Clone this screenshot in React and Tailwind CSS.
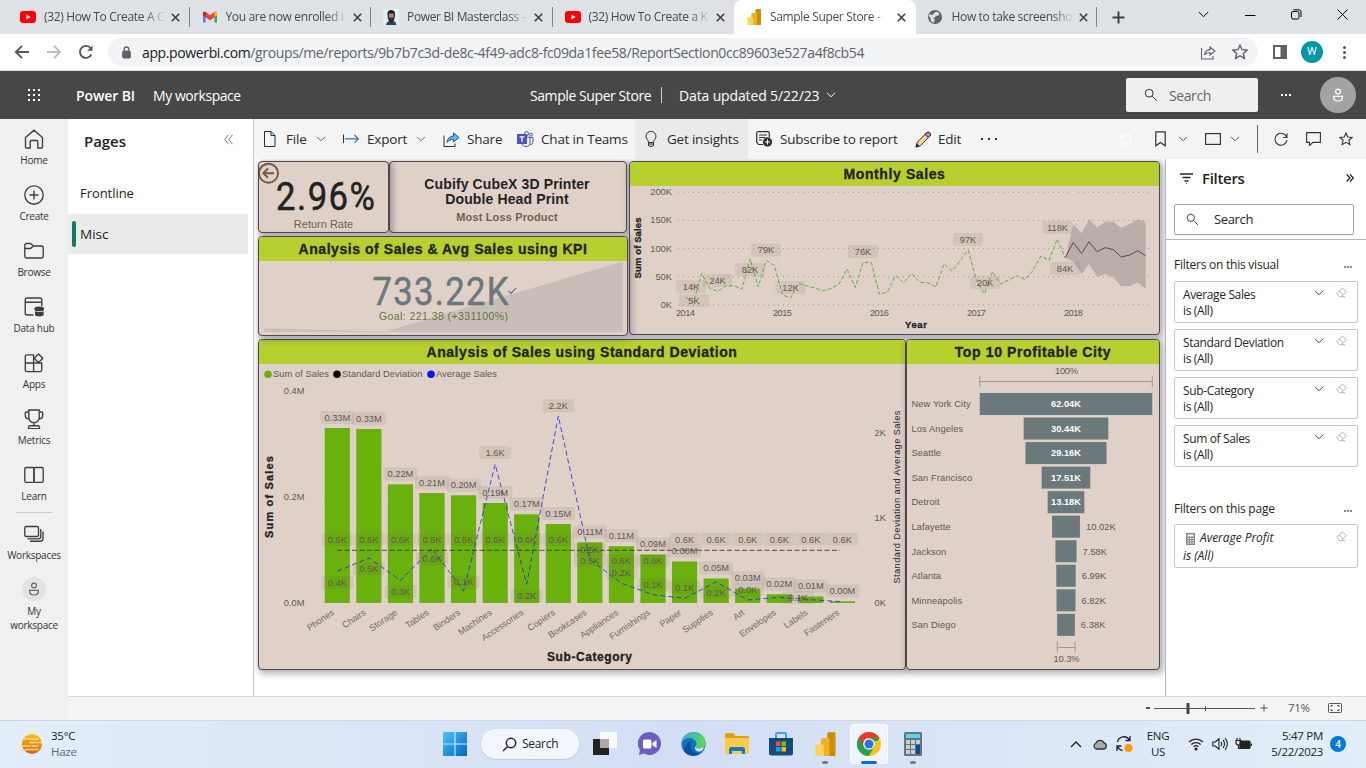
import React from "react";

/* ---------- shared glyphs ---------- */
const Svg = ({ w = 16, h, box, className = "", children, sw = 1, stroke = "currentColor" }) => (
  <svg width={w} height={h || w} viewBox={box || `0 0 ${w} ${h || w}`} fill="none" stroke={stroke} strokeWidth={sw} className={"shrink-0 " + className}>
    {children}
  </svg>
);
const Chevron = ({ className = "text-[#555]" }) => (
  <Svg w={10} h={6} className={className}><path d="M1 .8l4 4 4-4" /></Svg>
);
const Magnifier = ({ className = "text-[#333]", w = 14 }) => (
  <Svg w={w} box="0 0 14 14" className={className}><circle cx="5.2" cy="5.2" r="3.9" /><path d="M8.2 8.2l4.6 4.6" /></Svg>
);
const Person = ({ w = 14, className }) => (
  <Svg w={w} box="0 0 14 14" sw={1.2} className={className}><circle cx="7" cy="3.6" r="2.4" /><path d="M2.600 8.400h8.800v.9c0 2.400-2 3.700-4.400 3.700s-4.400-1.300-4.400-3.700z" /></Svg>
);
const Star = ({ w = 14, className }) => (
  <Svg w={w} box="0 0 14 14" sw={1.1} className={className}><path d="M7 1l1.800 4 4.400.4-3.300 2.900 1 4.300L7 10.300 3.100 12.600l1-4.300L.8 5.400 5.200 5z" /></Svg>
);

/* ---------- browser ---------- */
const YouTube = () => (
  <svg width="16" height="12" viewBox="0 0 16 12"><rect width="16" height="12" rx="3" fill="#f00" /><path d="M6.400 3.500v5L10.600 6z" fill="#fff" /></svg>
);
const Gmail = () => (
  <svg width="16" height="12" viewBox="0 0 16 12"><path d="M1 3v8.600h2.600V5z" fill="#4285f4" /><path d="M15 3v8.600h-2.600V5z" fill="#34a853" /><path d="M1 2.500C1 .8 2.800.3 3.800 1.100L8 4.300l4.200-3.200c1-.8 2.800-.3 2.800 1.400v1.700l-7 5.200-7-5.200z" fill="#ea4335" /><path d="M1 4.200V2.500C1 1.600 1.700.8 2.500.8l1.100.3V6z" fill="#c5221f" /><path d="M15 4.200V2.500c0-.9-.7-1.700-1.500-1.700l-1.100.3V6z" fill="#fbbc04" /></svg>
);
const Portrait = () => (
  <svg width="16" height="16" viewBox="0 0 16 16"><rect width="16" height="16" fill="#e3f0f8" /><path d="M3 16c.5-3 2.500-4.500 5.500-4.500s4.500 1.500 5 4.500z" fill="#24456b" /><path d="M4.500 5c0-3 1.500-4 3.700-4s3.800 1 3.800 4c0 5-1.500 8-3.800 8S4.500 10 4.500 5z" fill="#1c1c22" /><path d="M5.800 4.500h4.900v3.500c0 1.500-1 2.500-2.400 2.500S5.800 9.500 5.800 8z" fill="#b5846a" /><path d="M6.300 8.500h4v1.500h-4z" fill="#3a2a26" /></svg>
);
const PbiLogo = ({ w = 16, h = 16 }) => (
  <svg width={w} height={h} viewBox="0 0 16 16"><path d="M9.500 1c0-.5.4-.9.9-.9h3.700c.5 0 .9.400.9.900V15c0 .5-.4 1-.9 1H9.500z" fill="#cf8a06" /><path d="M5.300 5c0-.5.400-.9.900-.9h3.900c.5 0 .9.400.9.900v11H5.300z" fill="#ecb022" /><path d="M1.500 9.200c0-.5.4-.9.9-.9h3.900c.5 0 .9.400.9.900V16H2.400c-.5 0-.9-.4-.9-.9z" fill="#fad45c" /></svg>
);
const Globe = () => (
  <svg width="14" height="14" viewBox="0 0 14 14"><circle cx="7" cy="7" r="7" fill="#5f6368" /><path d="M7 2.200l2.500-.5 2 2-1.500 2H7.500v1.500L5 8l2 1.500L5.500 13 3 11 2.500 8 .8 6 2 3.500l2 2z" fill="#dee1e6" /></svg>
);
const TABS = [
  { icon: YouTube, title: "(32) How To Create A C" },
  { icon: Gmail, title: "You are now enrolled i" },
  { icon: Portrait, title: "Power BI Masterclass -" },
  { icon: YouTube, title: "(32) How To Create a K" },
  { icon: PbiLogo, title: "Sample Super Store -", active: true },
  { icon: Globe, title: "How to take screensho" },
];
const Tab = ({ icon: Icon, title, active, divider }) => (
  <div className={"relative flex h-[34px] w-[181.5px] items-center pl-3 " + (active ? "rounded-t-lg bg-white" : "")}>
    <div className="flex w-6 items-center"><Icon /></div>
    <div className="w-[125px] whitespace-nowrap text-[12px] tracking-[-0.34px] text-[#45494e] [mask-image:linear-gradient(to_right,#000_80%,transparent_98%)]">{title}</div>
    <Svg w={9} sw={1.600} className="ml-[2px] text-[#3c4043]"><path d="M.8.8l7.400 7.400M8.200.8L.8 8.200" /></Svg>
    {divider && <div className="absolute right-0 top-[7px] h-5 w-px bg-[#808387]" />}
  </div>
);
const Browser = () => (
  <>
    <div className="flex h-[34px] bg-[#dee1e6] pl-2">
      {TABS.map((t, i) => <Tab key={i} {...t} divider={i !== 3 && i !== 4} />)}
      <div className="flex flex-1 items-center">
        <Svg w={13} sw={2} className="ml-[15px] text-[#3c4043]"><path d="M6.500.5v12M.5 6.500h12" /></Svg>
        <div className="ml-auto mb-[6px] flex items-center pr-[18px] text-black">
          <Svg w={11} h={7} className="mr-[36px]"><path d="M.8 1l4.700 4.700L10.200 1" /></Svg>
          <Svg w={11} h={11} className="mr-[35px]"><path d="M0 6.500h10.500" /></Svg>
          <Svg w={11} h={11} className="mr-[35px]"><rect x=".5" y="2.500" width="7.500" height="7.500" rx="1.500" /><path d="M2.500.8H8A2 2 0 0 1 10 2.800V8" /></Svg>
          <Svg w={11} h={11}><path d="M.5.5l10 10M10.500.5l-10 10" /></Svg>
        </div>
      </div>
    </div>
    <div className="flex h-[37px] items-center border-b border-[#dadfdf] bg-white pl-[14px] pr-[20px]">
      <Svg w={16} sw={1.900} className="text-[#54585d]"><path d="M15 8H2M8 1.800L1.800 8 8 14.200" /></Svg>
      <Svg w={16} sw={1.900} className="ml-4 text-[#babcbe]"><path d="M1 8h13M8 1.800L14.200 8 8 14.200" /></Svg>
      <Svg w={16} sw={1.900} className="ml-4 text-[#54585d]"><path d="M13.400 10.500A6 6 0 1 1 12.600 4" /><path d="M14.500 1.500v5.300H9.200z" fill="currentColor" stroke="none" /></Svg>
      <div className="ml-[14px] flex h-7 w-[1150px] items-center rounded-full bg-[#f1f3f4] pl-[14px]">
        <Svg w={9} h={13}><rect x=".7" y="5" width="7.600" height="7" rx="1" fill="#5f6368" stroke="#5f6368" /><path d="M2.200 5V3.300a2.300 2.300 0 0 1 4.600 0V5" stroke="#5f6368" strokeWidth="1.300" /></Svg>
        <div className="ml-[11px] w-[1060px] whitespace-nowrap text-[14px] tracking-[-0.37px] text-[#5f6368]"><span className="text-[#202124]">app.powerbi.com</span>/groups/me/reports/9b7b7c3d-de8c-4f49-adc8-fc09da1fee58/ReportSection0cc89603e527a4f8cb54</div>
      </div>
      <div className="-ml-[58px] flex items-center">
        <Svg w={16} className="text-[#5f6368]" sw={1.100}><path d="M1.500 4v11h11.500v-3" /><path d="M4.500 11C5 7.500 7 5.800 10 5.600V3l5 4-5 4V8.500C7.500 8.500 6 9 4.500 11z" /></Svg>
        <Star w={16} className="ml-[16px] text-[#54585d]" />
      </div>
      <Svg w={14} className="ml-[25px] text-[#5f6368]"><rect x="1" y="1" width="12" height="12" strokeWidth="2" /><path d="M8 1h5v12H8z" fill="currentColor" /></Svg>
      <div className="ml-[14px] flex h-[22px] w-[22px] items-center justify-center rounded-full bg-[#0097a7] font-['Roboto'] text-[11px] text-white">W</div>
      <div className="ml-auto flex flex-col gap-[2px]"><i className="h-[3px] w-[3px] rounded-full bg-[#54585d]" /><i className="h-[3px] w-[3px] rounded-full bg-[#54585d]" /><i className="h-[3px] w-[3px] rounded-full bg-[#54585d]" /></div>
    </div>
  </>
);

/* ---------- Power BI header ---------- */
const Header = () => (
  <div className="flex h-12 items-center bg-[#474747] text-[14px] text-white">
    <svg width="12" height="12" viewBox="0 0 12 12" className="ml-7 shrink-0">
      {[0, 5, 10].map((y) => [0, 5, 10].map((x) => <rect key={x + "-" + y} x={x} y={y} width="2" height="2" fill="#fff" />))}
    </svg>
    <div className="ml-[36px] w-[77px] whitespace-nowrap text-[14px] font-semibold tracking-[-0.1px]">Power BI</div>
    <div className="w-[377px] whitespace-nowrap tracking-[-0.45px]">My workspace</div>
    <div className="w-[131px] whitespace-nowrap tracking-[-0.42px]">Sample Super Store</div>
    <div className="h-4 w-[18px]"><div className="h-4 w-px bg-[#d0d0d0]" /></div>
    <div className="w-[147px] whitespace-nowrap tracking-[-0.14px]">Data updated 5/22/23</div>
    <Chevron className="text-white" />
    <div className="ml-[290px] flex h-[34px] w-[132px] items-center rounded-[2px] bg-[#eee] pl-[18px]">
      <Magnifier />
      <span className="ml-[11px] text-[14px] tracking-[-0.4px] text-[#666]">Search</span>
    </div>
    <div className="ml-[23px] flex gap-[2px]"><i className="h-[2px] w-[2px] bg-white" /><i className="h-[2px] w-[2px] bg-white" /><i className="h-[2px] w-[2px] bg-white" /></div>
    <div className="ml-[29px] flex h-9 w-9 items-center justify-center rounded-full bg-[#a3a3a3]"><Person className="text-white" /></div>
  </div>
);

/* ---------- left navigation ---------- */
const NAV = [
  ["Home", <><path d="M1.500 8.500L10 1.200l8.500 7.300V18a1 1 0 0 1-1 1h-3.700v-6.500a1 1 0 0 0-1-1H7.200a1 1 0 0 0-1 1V19H2.500a1 1 0 0 1-1-1z" /></>],
  ["Create", <><circle cx="10" cy="10" r="9.200" /><path d="M10 5.500v9M5.500 10h9" /></>],
  ["Browse", <><path d="M.8 7.500V4.200C.8 3.200 1.500 2.500 2.500 2.500h4L9.500 5h7.800c1 0 1.900.8 1.900 1.800v8.400c0 1-.8 1.800-1.800 1.800H2.600c-1 0-1.800-.8-1.800-1.800zM.8 7.500h5.700L9.500 5" /></>],
  ["Data hub", <><path d="M9.500 18H3.200A2 2 0 0 1 1.200 16V3A2 2 0 0 1 3.200 1h12.600a2 2 0 0 1 2 2v6M1.200 5.200h16.600" /><ellipse cx="15.300" cy="11.900" rx="4.300" ry="1.700" fill="currentColor" /><path d="M11 14v3.800c0 1 2 1.700 4.300 1.700s4.300-.7 4.300-1.700V14c-2 1.300-6.600 1.300-8.600 0z" fill="currentColor" stroke="none" /></>],
  ["Apps", <><path d="M9.600 18.600H3a1.700 1.700 0 0 1-1.700-1.700V3.500a1.700 1.700 0 0 1 1.700-1.700h6.600zM1.300 10h16.400v6.900a1.700 1.700 0 0 1-1.700 1.700H9.600" /><path d="M14.500.900l4.300 4.300-4.300 4.300-4.300-4.300z" fill="#f0f0f0" strokeLinejoin="round" /></>],
  ["Metrics", <><path d="M4.800 1h10.400v7.500a5.200 5.200 0 0 1-10.400 0zM4.800 3H2.300c-.6 0-1 .4-1 1v2.500c0 1.800 1.500 3.300 3.500 3.300M15.200 3h2.500c.6 0 1 .4 1 1v2.500c0 1.800-1.500 3.300-3.500 3.300M10 13.700v3M4.500 19.600v-1.200c0-1 .7-1.700 1.700-1.700h7.600c1 0 1.700.7 1.700 1.700v1.200z" /></>],
  ["Learn", <><rect x=".8" y="2.500" width="9.200" height="14.800" rx="1.300" /><rect x="10" y="2.500" width="9.200" height="14.800" rx="1.300" /></>],
];
const NavItem = ({ label, children }) => (
  <div className="flex h-14 flex-col items-center pt-[10px]">
    <Svg w={20} sw={1.350} className="text-[#3d3d3d]">{children}</Svg>
    <div className="mt-[3px] whitespace-nowrap text-[10px] leading-4 tracking-[-0.25px] text-[#333]">{label}</div>
  </div>
);
const LeftNav = () => (
  <div className="w-[68px] shrink-0 bg-[#f0f0f0]">
    {NAV.map(([l, p]) => <NavItem key={l} label={l}>{p}</NavItem>)}
    <div className="mx-auto mt-px h-px w-9 bg-[#c8c8c8]" />
    <div className="pt-px">
      <NavItem label="Workspaces"><rect x=".8" y="2.500" width="13.700" height="10" rx="1.500" /><path d="M16.800 5v7.500c0 1.500-1 2.300-2.300 2.300H3.500M19 7.500v7c0 1.700-1.300 2.700-2.800 2.700H6" /></NavItem>
    </div>
    <div className="flex flex-col items-center pt-[7px]">
      <div className="flex h-6 w-6 items-center justify-center rounded-full bg-[#e3e3e3]"><Person w={14} className="text-[#666]" /></div>
      <div className="mt-[3px] text-center text-[10px] leading-[14px] tracking-[-0.25px] text-[#333]">My<br />workspace</div>
    </div>
  </div>
);
const PagesPane = () => (
  <div className="flex w-[186px] shrink-0 flex-col border-r border-[#c4c4c4] bg-white text-[#222]">
    <div className="flex h-[55px] items-center justify-between pl-4 pr-[20px] pb-[11px]">
      <span className="text-[15px] font-semibold tracking-[-0.05px]">Pages</span>
      <Svg w={9} h={11} className="-mt-1 text-[#777]"><path d="M4.500.8L.8 5.500l3.700 4.700M8.500.8L4.800 5.500l3.700 4.700" /></Svg>
    </div>
    <div className="flex h-10 items-center pl-3 text-[13px] tracking-[-0.05px]">Frontline</div>
    <div className="flex h-10 w-[180px] items-center bg-[#eaeaea] pl-1">
      <div className="h-[26px] w-1 rounded-full bg-[#117865]" />
      <span className="ml-1 text-[13.500px] font-medium">Misc</span>
    </div>
  </div>
);

/* ---------- toolbar ---------- */
const Tool = ({ icon, label, w, gap = "w-6", chev, className = "" }) => (
  <div className={"flex h-10 shrink-0 items-center whitespace-nowrap " + w + " " + className}>
    <div className={"flex shrink-0 items-center " + gap}>{icon}</div>
    <span>{label}</span>
    {chev && <Chevron className={"ml-[9px] text-[#666]"} />}
  </div>
);
const Toolbar = () => (
  <div className="flex h-10 items-center bg-[#f4f4f4] pl-[9px] text-[13.500px] tracking-[-0.2px] text-[#2b2b2b]">
    <Tool w="w-[80px]" gap="w-[23px]" label="File" chev icon={<Svg w={13} h={16}><path d="M1.500.5h6.500l4 4v11H1.500zM8 .5v4h4" /></Svg>} />
    <Tool w="w-[100px]" label="Export" chev icon={<Svg w={16} h={12}><path d="M.5 1.500v8.500" /><path d="M2 5.800h13M11.500 2l3.800 3.800L11.500 9.600" stroke="#2a7ab8" strokeWidth="1.200" /></Svg>} />
    <Tool w="w-[74px]" label="Share" icon={<Svg w={17} h={15}><path d="M1 3.500v11h11v-3" /><path d="M4 10.500C4.500 6.500 6.500 4.300 10.500 4V1l5.500 4.500-5.500 4.500V7.500C7.500 7.500 5.500 8.500 4 10.500z" fill="#6cb2ec" stroke="#0f5a9c" /></Svg>} />
    <Tool w="w-[118px]" label="Chat in Teams" icon={<Svg w={17} h={16}><circle cx="9.500" cy="2.600" r="2" stroke="#4b53bc" /><circle cx="14" cy="3.600" r="1.500" stroke="#4b53bc" /><path d="M10 6.200h3V12c0 2-1.500 3.500-4 3.500s-3.500-1-4-2.500M13 6.500h3V11c0 1.500-1 2.500-3 2.500" stroke="#4b53bc" /><rect x="0" y="3" width="10" height="10" fill="#4b53bc" stroke="none" /><path d="M2.500 5.800h5M5 5.800v5" stroke="#fff" strokeWidth="1.300" /></Svg>} />
    <Tool w="w-[113px]" className="bg-[#eaeaea] pl-[10px]" gap="w-[22px]" label="Get insights" icon={<Svg w={12} h={16}><path d="M3.500 11.500C3.500 9 1 8 1 5.300a5 5 0 0 1 10 0c0 2.700-2.500 3.700-2.500 6.200zM3.500 11.500v2.500c0 .8.5 1.300 1.300 1.300h2.400c.8 0 1.300-.5 1.300-1.300v-2.500M3.500 13h5" /></Svg>} />
    <Tool w="w-[168px]" className="pl-2" label="Subscribe to report" icon={<Svg w={17} h={16}><path d="M7 13.500H2.500L.7 11V2.200C.7 1.300 1.300.700 2.200.700h9.600c.9 0 1.500.600 1.500 1.500V6M3 4h8M3 6.500h6M3 9h3" strokeWidth="1.200" /><circle cx="11.500" cy="11" r="4.700" fill="#333" stroke="none" /><path d="M11.500 8.500v5M9 11h5" stroke="#fff" /></Svg>} />
    <Tool w="w-[64px]" gap="w-[23px]" label="Edit" className="-ml-px" icon={<Svg w={17} h={17}><path d="M1 16l1.300-4.700L11.300 2c1.100-1.100 2.400-1.100 3.400-.1s1 2.300-.1 3.400L5.500 14.700z" fill="#f6d78b" strokeLinejoin="round" /><path d="M10 3.300l3.300 3.300 1.700-1.700c.9-1 .8-2.200 0-3s-2.200-.9-3.200.1z" fill="#c77fd0" /><path d="M1 16l.9-3L4 15.100z" fill="#2b2b2b" /></Svg>} />
    <div className="ml-[2px] flex gap-[5px]"><i className="h-[2px] w-[2px] bg-[#333]" /><i className="h-[2px] w-[2px] bg-[#333]" /><i className="h-[2px] w-[2px] bg-[#333]" /></div>
    <div className="ml-auto flex items-center pr-[13px] text-[#333]">
      <Svg w={13} h={13} className="mr-[22px] text-white" sw={1.200}><path d="M1 1v4h4M1.500 4.800A5 5 0 1 1 2 9" /></Svg>
      <Svg w={11} h={16} sw={1.200} className="mr-[12px]"><path d="M.8.8h9.400v14L5.500 11.500.8 14.800z" /></Svg>
      <Chevron />
      <Svg w={16} h={12} sw={1.200} className="ml-[17px] mr-[9px]"><rect x=".6" y=".6" width="14.800" height="10.800" /></Svg>
      <Chevron />
      <div className="ml-[17px] h-7 w-px bg-[#666]" />
      <Svg w={14} className="ml-[16px]" sw={1.100}><path d="M12.800 5.500A6 6 0 1 0 13 8M13 1.500V5.500H9" /></Svg>
      <Svg w={15} h={14} className="ml-[18px]" sw={1.100}><path d="M.6.6h13.800v9.800H7L3.500 13.500v-3.100H.6z" /></Svg>
      <Star className="ml-[18px]" />
    </div>
  </div>
);

/* ---------- report tiles ---------- */
const TILE = "overflow-hidden rounded-[4px] border border-[#4e4848] bg-[#dfd1c7] shadow-[2px_2px_6px_2px_rgba(60,55,85,0.38)]";
const TileTitle = ({ children, className = "" }) => (
  <div className={"flex shrink-0 items-center justify-center whitespace-nowrap bg-[#b7cf2f] font-['Liberation_Sans'] text-[14px] font-bold text-[#222] [-webkit-text-stroke:0.3px_#222] " + className}>{children}</div>
);
const Label = ({ x, y, w = 30, children, box = true }) => (
  <g>
    {box && <rect x={x - w / 2} y={y - 6.500} width={w} height="13" rx="2" fill="#6b5b50" fillOpacity=".1" />}
    <text x={x} y={y + 3.300} textAnchor="middle" fontSize="9.300" fill="#605850">{children}</text>
  </g>
);

const KpiTile = () => (
  <div className={"relative flex h-[100px] flex-col " + TILE}>
    <TileTitle className="h-6 tracking-[0.55px]">Analysis of Sales &amp; Avg Sales using KPI</TileTitle>
    <svg width="368" height="74" viewBox="259 261 368 74" className="block">
      <path d="M264 328.300L385 331.500 623 261.500V331.800H264z" fill="#c8beb7" />
      <text transform="translate(372.500 304.500) scale(.9 1)" fontFamily="Roboto" fontSize="38.500" fill="#6b787b" stroke="#6b787b" strokeWidth=".5" textLength="151" lengthAdjust="spacing">733.22K</text>
      <path d="M508.500 291l2.500 2.500 5-5.500" fill="none" stroke="#6b787b" strokeWidth="1.200" />
      <text x="443.500" y="319.500" textAnchor="middle" fontFamily="Liberation Sans" fontSize="10.500" fill="#5f7445" textLength="129">Goal: 221.38 (+331100%)</text>
    </svg>
  </div>
);

const MONTHLY = [14, 5, 56, 29, 24, 34, 34, 28, 82, 32, 79, 70, 18, 12, 38, 34, 30, 25, 29, 37, 64, 31, 76, 75, 19, 23, 52, 39, 56, 40, 39, 32, 73, 60, 79, 97, 44, 20, 59, 37, 44, 52, 45, 61, 87, 79, 117, 83.500];
const MONTH_LABELS = [["14K", 691, 286.500], ["5K", 694, 300.500], ["24K", 717.500, 280.500], ["82K", 750, 269.500], ["79K", 766, 250], ["12K", 790.500, 287.500], ["76K", 863, 251.500], ["97K", 968, 239.500], ["20K", 985, 282.500], ["118K", 1057.500, 227.500], ["84K", 1065, 268.500]];
const MonthlyTile = () => (
  <div className={"flex h-[174px] w-[531px] flex-col " + TILE}>
    <TileTitle className="h-6 tracking-[0.6px]">Monthly Sales</TileTitle>
    <svg width="529" height="148" viewBox="630 186 529 148" className="block font-['Liberation_Sans']">
      {["200K", "150K", "100K", "50K", "0K"].map((t, i) => (
        <g key={t}>
          <path d={`M678 ${192.300 + i * 28.150}H1153`} stroke="#a3988f" strokeDasharray="1 4" />
          <text x="672" y={195.300 + i * 28.150} textAnchor="end" fontSize="9.300" fill="#605850">{t}</text>
        </g>
      ))}
      {[2014, 2015, 2016, 2017, 2018].map((t, i) => (
        <g key={t}>
          <path d={`M${685.500 + i * 97} 192V304`} stroke="#e8ddd5" strokeDasharray="1 4" />
          <text x={685.500 + i * 97} y="316" textAnchor="middle" fontSize="9.300" fill="#605850" textLength="19">{t}</text>
        </g>
      ))}
      <g transform="translate(990 115) scale(.3333)">
        <path d="M226 428L250 328 275 355 297 313 321 337 346 320 370 321 394 338 419 328 443 312 467 321V521L443 503 419 513 394 514 370 487 346 477 321 485 297 447 275 478 250 440z" fill="#bbada7" />
        <path d="M226 428L250 382 275 416 297 380 321 410 346 398 370 404 394 426 419 420 443 407 467 422" fill="none" stroke="#554c54" strokeWidth="3" />
      </g>
      <polyline points={MONTHLY.map((v, i) => `${685.500 + i * 8.080},${304.900 - v * 0.563}`).join(" ")} fill="none" stroke="#5fae4a" strokeWidth="1" strokeDasharray="4 2" />
      {MONTH_LABELS.map(([t, x, y]) => <Label key={t} x={x} y={y}>{t}</Label>)}
      <text transform="translate(641 248) rotate(-90)" textAnchor="middle" fontSize="9.500" fontWeight="bold" fill="#222" stroke="#222" strokeWidth=".3" textLength="61">Sum of Sales</text>
      <text x="916" y="328" textAnchor="middle" fontSize="9.500" fontWeight="bold" fill="#222" stroke="#222" strokeWidth=".3" textLength="22">Year</text>
    </svg>
  </div>
);

const CATS = [
  ["Phones", 428, "0.33M", 571.300], ["Chairs", 429, "0.33M", 558], ["Storage", 484.300, "0.22M", 580.300], ["Tables", 493, "0.21M", 548.500], ["Binders", 495.300, "0.20M", 591],
  ["Machines", 503, "0.19M", 464.300], ["Accessories", 514.300, "0.17M", 584.300], ["Copiers", 524, "0.15M", 416], ["Bookcases", 542.300, "0.11M", 559.500], ["Appliances", 546.200, "0.11M", 583.300],
  ["Furnishings", 554.500, "0.09M", 594.700], ["Paper", 561.500, "0.08M", 598.300], ["Supplies", 578.500, "0.05M", 582], ["Art", 588.500, "0.03M", 600], ["Envelopes", 594.300, "0.02M", 597.300], ["Labels", 596.500, "0.01M", 599.700], ["Fasteners", 601.300, "0.00M", 601.700],
];
const AVG_LABELS = [[0, "0.4K", 582.500], [1, "0.5K", 568.500], [2, "0.3K", 591.500], [3, "0.6K", 558.700], [4, "0.1K", 582], [5, "1.6K", 452.500], [6, "0.2K", 595.500], [7, "2.2K", 405.800], [8, "0.5K", 549.300], [8, "0.6K", 560.500], [9, "0.6K", 560.500], [9, "0.2K", 572.700], [10, "0.6K", 560.500], [10, "0.1K", 584.500], [11, "0.1K", 587.300], [12, "0.2K", 592.500], [13, "0.0K", 589.700], [14.600, "0.1K", 597.500]];
const cx = (i) => 337.300 + i * 31.570;
const DeviationTile = () => (
  <div className={"flex h-[331px] w-[648px] flex-col " + TILE}>
    <TileTitle className="h-6 tracking-[0.55px]">Analysis of Sales using Standard Deviation</TileTitle>
    <svg width="646" height="305" viewBox="259 364 646 305" className="block font-['Liberation_Sans']">
      {[["#6ab10d", 268, "Sum of Sales", 56], ["#000", 337, "Standard Deviation", 80.500], ["#0019ff", 431, "Average Sales", 61]].map(([c, x, t, w]) => (
        <g key={t}><circle cx={x} cy="374.300" r="3.800" fill={c} /><text x={x + 5} y="377.300" fontSize="9.300" fill="#605850" textLength={w}>{t}</text></g>
      ))}
      {["0.4M", "0.2M", "0.0M"].map((t, i) => (
        <g key={t}>
          <path d={`M312 ${391.300 + i * 105.800}H864`} stroke="#ebe1d9" strokeDasharray="1 4" />
          <text x="304.500" y={394.300 + i * 105.800} textAnchor="end" fontSize="9.300" fill="#605850">{t}</text>
        </g>
      ))}
      {["2K", "1K", "0K"].map((t, i) => <text key={t} x="874.500" y={436 + i * 85} fontSize="9.300" fill="#605850">{t}</text>)}
      {CATS.map(([n, y], i) => <rect key={n} x={cx(i) - 12.600} y={y} width="25.200" height={603 - y} fill="#6ab10d" />)}
      {CATS.map(([n], i) => <text key={n} transform={`translate(${cx(i) - 2.500} 614) rotate(-34)`} textAnchor="end" fontSize="9" fill="#726960">{n}</text>)}
      <path d="M337 550.300H840" stroke="#3a302c" strokeOpacity=".7" strokeWidth="1.200" strokeDasharray="5 2.500" />
      <polyline points={CATS.map((c, i) => `${cx(i)},${c[3]}`).join(" ")} fill="none" stroke="#1a25e8" strokeOpacity=".8" strokeWidth="1" strokeDasharray="5 3" />
      {CATS.map(([n, y, t], i) => <Label key={n} x={cx(i)} y={y - 10.400} w={34}>{t}</Label>)}
      {CATS.map(([n], i) => (i < 8 || i > 10) && <Label key={n} x={cx(i)} y={539.300} w={31}>0.6K</Label>)}
      {AVG_LABELS.map(([i, t, y], k) => <Label key={k} x={cx(i)} y={y} w={32}>{t}</Label>)}
      <text transform="translate(272.500 497) rotate(-90)" textAnchor="middle" fontSize="11" fontWeight="bold" fill="#222" stroke="#222" strokeWidth=".3" textLength="82">Sum of Sales</text>
      <text transform="translate(900 497) rotate(-90)" textAnchor="middle" fontSize="9.300" fill="#222" textLength="173">Standard Deviation and Average Sales</text>
      <text x="589.500" y="661" textAnchor="middle" fontSize="12" fontWeight="bold" fill="#222" stroke="#222" strokeWidth=".3" textLength="85">Sub-Category</text>
    </svg>
  </div>
);

const CITIES = [["New York City", 62.040, "62.04K"], ["Los Angeles", 30.440, "30.44K"], ["Seattle", 29.160, "29.16K"], ["San Francisco", 17.510, "17.51K"], ["Detroit", 13.180, "13.18K"], ["Lafayette", 10.020, "10.02K"], ["Jackson", 7.580, "7.58K"], ["Atlanta", 6.990, "6.99K"], ["Minneapolis", 6.820, "6.82K"], ["San Diego", 6.380, "6.38K"]];
const FunnelTile = () => (
  <div className={"flex h-[331px] w-[254px] flex-col " + TILE}>
    <TileTitle className="h-6 tracking-[0.62px]">Top 10 Profitable City</TileTitle>
    <svg width="252" height="305" viewBox="907 364 252 305" className="block font-['Liberation_Sans']" fontSize="9.300" fill="#605850">
      <text x="1066.500" y="374" textAnchor="middle" textLength="23">100%</text>
      <path d="M979.800 376v11M1152.300 376v11M979.800 381.500h172.500M1057.300 641.500v11M1075 641.500v11M1057.300 647.500h17.700" stroke="#a3988f" />
      {CITIES.map(([n, v, t], i) => {
        const w = (v / 62.040) * 172.500;
        const y = 393 + i * 24.540;
        return (
          <g key={n}>
            <rect x={1066 - w / 2} y={y} width={w} height="22" fill="#6b787c" />
            <text x="911.500" y={y + 14.300} letterSpacing=".1">{n}</text>
            {i < 5 ? <text x="1066" y={y + 14.300} textAnchor="middle" fill="#fff" fontWeight="bold" textLength="30">{t}</text> : <text x={1066 + w / 2 + 6} y={y + 14.300} letterSpacing=".05">{t}</text>}
          </g>
        );
      })}
      <text x="1066.500" y="662" textAnchor="middle" textLength="26">10.3%</text>
    </svg>
  </div>
);

const Report = () => (
  <div className="w-[911px] shrink-0 overflow-hidden bg-white pl-[4px] pt-[2px]">
    <div className="flex w-[907px] flex-col gap-[3px]">
      <div className="flex h-[175px] gap-[1px]">
        <div className="flex w-[370px] shrink-0 flex-col gap-[3px]">
          <div className="flex h-[72px]">
            <div className={"relative flex w-[131px] flex-col items-center font-['Liberation_Sans'] " + TILE}>
              <Svg w={22} sw={1.900} className="absolute -left-px top-0 text-[#735747]"><circle cx="10.500" cy="11.200" r="9.500" /><path d="M16 11.200H5.500M10 6.500L5.300 11.200l4.700 4.700" /></Svg>
              <svg width="129" height="56" viewBox="0 0 129 56" className="block shrink-0"><text transform="translate(17 48) scale(.9 1)" fontFamily="Roboto" fontSize="38.500" fill="#222" stroke="#222" strokeWidth=".5" textLength="110">2.96%</text></svg>
              <div className="text-[11px] leading-3 text-[#735f50]">Return Rate</div>
            </div>
            <div className={"flex w-[238px] flex-col items-center pt-[15px] pr-[2px] text-center font-['Liberation_Sans'] font-bold text-[#222] " + TILE}>
              <div className="text-[14px] leading-[15px] tracking-[0.12px]">Cubify CubeX 3D Printer<br />Double Head Print</div>
              <div className="mt-[4px] text-[11px] leading-3 tracking-[0.15px] text-[#735f50]">Most Loss Product</div>
            </div>
          </div>
          <KpiTile />
        </div>
        <MonthlyTile />
      </div>
      <div className="flex">
        <DeviationTile />
        <FunnelTile />
      </div>
    </div>
  </div>
);

/* ---------- filters ---------- */
const Eraser = () => (
  <Svg w={11} h={11} className="text-[#b0b0b0]"><path d="M6.500.8l3.700 3.700-5 5H3.500L.8 6.500zM3.300 4l3.700 3.700M5.200 9.700H9" /></Svg>
);
const Dots = () => <div className="flex gap-[1px] pt-1"><i className="h-[2px] w-[2px] bg-[#888]" /><i className="h-[2px] w-[2px] bg-[#888]" /><i className="h-[2px] w-[2px] bg-[#888]" /></div>;
const FilterCard = ({ name }) => (
  <div className="flex h-[42px] rounded-[2px] border border-[#c8c6c4] pl-[8px] pr-[10px]">
    <div className="mt-[5px] flex-1 whitespace-nowrap text-[12px] leading-4 tracking-[-0.36px]">{name}<br />is (All)</div>
    <Chevron className="mr-[12px] mt-[8px] text-[#444]" />
    <div className="mt-[5px]"><Eraser /></div>
  </div>
);
const Filters = () => (
  <div className="flex-1 border-l border-[#b5b5b5] bg-white text-[#252423]">
    <div className="flex h-[81px] flex-col border-b border-[#b5b5b5] pl-2">
      <div className="flex h-[38px] items-center pl-[6px]">
        <Svg w={13} h={11} sw={1.400}><path d="M0 1h13M2.500 4.500h8M4.500 8h4M6 11h1" /></Svg>
        <span className="ml-[9px] flex-1 text-[15px] font-semibold tracking-[-0.3px]">Filters</span>
        <Svg w={8} h={8} sw={1.300} className="mr-[12px]"><path d="M.6.5L4 4 .6 7.500M4 .5L7.400 4 4 7.500" /></Svg>
      </div>
      <div className="mt-[7px] flex h-[31px] w-[180px] items-center rounded-[2px] border border-[#a0a0a0] pl-[11px]">
        <Magnifier w={13} />
        <span className="ml-[15px] text-[13px] tracking-[-0.35px]">Search</span>
      </div>
    </div>
    <div className="flex flex-col gap-[6px] pl-2 pr-[8px]">
      <div className="flex h-[35px] items-center justify-between pr-[6px] pt-[15px] text-[12px] tracking-[-0.24px]">Filters on this visual<Dots /></div>
      {["Average Sales", "Standard Deviation", "Sub-Category", "Sum of Sales"].map((n) => <FilterCard key={n} name={n} />)}
      <div className="mt-[26px] flex h-[19px] items-center justify-between pr-[6px] text-[12px] tracking-[-0.24px]">Filters on this page<Dots /></div>
      <div className="flex h-[44px] rounded-[2px] border border-[#c8c6c4] pl-[8px] pr-[10px]">
        <div className="mt-[4px] flex-1 text-[12px] italic leading-[18px] tracking-[-0.05px]">
          <div className="flex items-center"><svg width="9" height="12" viewBox="0 0 9 12" className="ml-[3px] mr-[5px] mt-[2px]"><path d="M0 0h9v12H0z" fill="#888" /><path d="M1.500 1.500h6v2h-6zM1.500 5h1.500v1H1.500zM4 5h1.500v1H4zM6.500 5H8v1H6.500zM1.500 7.300h1.500v1H1.500zM4 7.300h1.500v1H4zM6.500 7.300H8v1H6.500zM1.500 9.500h1.500v1H1.500zM4 9.500h1.500v1H4zM6.500 9.500H8v1H6.500z" fill="#fff" /></svg>Average Profit</div>
          <div>is (All)</div>
        </div>
        <div className="mt-[6px]"><Eraser /></div>
      </div>
    </div>
  </div>
);

const StatusBar = () => (
  <div className="flex h-[24px] items-center border-t border-[#d8d8d8] bg-[#f4f4f4] pb-[2px] text-[#555]">
    <div className="ml-auto h-[2px] w-[4px] bg-[#555]" />
    <svg width="101" height="12" viewBox="0 0 101 12" className="ml-[4px]"><path d="M0 6.500h101" stroke="#555" /><path d="M34 1v11" stroke="#444" strokeWidth="3" /><path d="M51.500 4v5" stroke="#555" /></svg>
    <Svg w={8} className="ml-[5px]"><path d="M4 .500v7M.5 4h7" /></Svg>
    <div className="ml-[20px] w-[23px] text-[11.500px] tracking-[-0.3px]">71%</div>
    <Svg w={14} h={10} className="ml-[17px] mr-[24px]"><rect x=".5" y=".5" width="13" height="9" rx="1" /><path d="M5 2.500H3v1.500M9 2.500h2v1.500M5 7.500H3V6M9 7.500h2V6" /></Svg>
  </div>
);

/* ---------- Windows taskbar ---------- */
const TaskIcon = ({ children, dot, active }) => (
  <div className={"relative mx-[3px] flex h-10 w-[38px] items-center justify-center pb-px " + (active ? "rounded-[4px] border border-white/70 bg-white/60" : "")}>
    {children}
    {dot && <div className="absolute bottom-0 h-[3px] w-[6px] rounded-full bg-[#7a7f86]" />}
    {active && <div className="absolute -bottom-px h-[3px] w-4 rounded-full bg-[#0a6fd0]" />}
  </div>
);
const Taskbar = () => (
  <div className="relative flex h-12 items-center border-t border-[#cbd8e8] bg-linear-to-r from-[#e2eef8] via-[#d3def5] to-[#e2eef8] pb-px text-[#222]">
    <svg width="24" height="22" viewBox="0 0 24 22" className="ml-5"><defs><linearGradient id="sun" x1="0" y1="0" x2="0" y2="1"><stop stopColor="#fcc100" /><stop offset="1" stopColor="#ea5b0c" /></linearGradient></defs><circle cx="12" cy="11" r="10" fill="url(#sun)" /><path d="M4 6h14M10 9.500h12M1 13h9M12 13h6M6 16.500h12M0 17.500h5" stroke="#f8dda0" strokeWidth="1.500" strokeLinecap="round" /></svg>
    <div className="ml-[7px] w-[382px] text-[11.500px] leading-4 tracking-[-0.25px]">35°C<div className="text-[#5f666d]">Haze</div></div>
    <div className="flex items-center">
      <div className="flex w-[44px] justify-center"><svg width="24" height="24" viewBox="0 0 24 24"><defs><linearGradient id="win" x1="0" y1="0" x2="1" y2="1"><stop stopColor="#4ec3f5" /><stop offset="1" stopColor="#0067c5" /></linearGradient></defs><path d="M0 0h11.400v11.400H0zM12.600 0H24v11.400H12.600zM0 12.600h11.400V24H0zM12.600 12.600H24V24H12.600z" fill="url(#win)" /></svg></div>
      <div className="ml-[4px] mr-[4px] flex h-[30px] w-[98px] items-center rounded-full bg-[#f3f7fd] pl-[21px] shadow-[0_1px_1px_rgba(90,110,150,0.25)]">
        <Svg w={15} sw={1.500}><circle cx="9" cy="6" r="4.700" /><path d="M5.700 9.500L1 14" /></Svg>
        <span className="ml-[5px] text-[12px] tracking-[-0.3px]">Search</span>
      </div>
      <TaskIcon><svg width="24" height="23" viewBox="0 0 24 23"><path d="M7 0h17v16H7z" fill="#fafafa" /><path d="M0 7h16v16H0z" fill="#222" /><path d="M7 7h9v9H7z" fill="#aaa" /></svg></TaskIcon>
      <TaskIcon><svg width="23" height="24" viewBox="0 0 23 24"><path d="M11.500 0a11.500 11.500 0 1 1-5.500 21.600L1 23l.9-5A11.500 11.500 0 0 1 11.500 0z" fill="#6e5cc0" /><rect x="5" y="7.500" width="8.500" height="9" rx="1.500" fill="#fff" /><path d="M14.500 11l4-3v8l-4-3z" fill="#fff" /></svg></TaskIcon>
      <TaskIcon><svg width="25" height="24" viewBox="0 0 25 24"><defs><linearGradient id="eg" x1="0" y1="0" x2="1" y2=".4"><stop stopColor="#2bb1e8" /><stop offset="1" stopColor="#5fd35b" /></linearGradient></defs><circle cx="12.500" cy="12" r="12" fill="#1272c4" /><path d="M.5 11C1.500 4 7 0 12.500 0c7 0 12 5 12 10.500 0 3.500-2.500 6-6 6-2.500 0-4-1-4-2 0-.8 1-1.200 1-3 0-3-3.200-5.500-7-5.500-4 0-7 2.500-8 5z" fill="url(#eg)" /><path d="M9 12.500c0 6 5 9.500 10 8.500-4 3.500-12 4-16-2C5 10 9 9 11 9c-1 .8-2 2-2 3.500z" fill="#0d4f9c" /><path d="M14 14.500c1 2.500 6 2.500 9.500.5l-2.500 4c-4 1.500-8-.5-7-4.500z" fill="#d5e0f5" /></svg></TaskIcon>
      <TaskIcon><svg width="24" height="21" viewBox="0 0 24 21"><path d="M0 1.500C0 .7.7 0 1.500 0H8l2.500 3H24v5H0z" fill="#e0a010" /><path d="M0 5h24v14.500c0 .8-.7 1.500-1.500 1.500h-21C.7 21 0 20.300 0 19.500z" fill="#fbcb46" /><path d="M4 21v-4.500C4 15 5 14 6.500 14h11c1.500 0 2.500 1 2.500 2.500V21h-3v-3H7v3z" fill="#1478cf" /></svg></TaskIcon>
      <TaskIcon><svg width="24" height="24" viewBox="0 0 24 24"><path d="M7 6V2c0-.6.4-1 1-1h8c.6 0 1 .4 1 1v4" fill="none" stroke="#36a8e8" strokeWidth="2" /><path d="M0 6h24v15a2.500 2.500 0 0 1-2.500 2.500h-19A2.500 2.500 0 0 1 0 21z" fill="#174a7c" /><path d="M7 9.500h4.500V14H7z" fill="#f25022" /><path d="M12.500 9.500H17V14h-4.500z" fill="#7fba00" /><path d="M7 15h4.500v4.500H7z" fill="#00a4ef" /><path d="M12.500 15H17v4.500h-4.500z" fill="#ffb900" /></svg></TaskIcon>
      <TaskIcon dot><PbiLogo w={24} h={24} /></TaskIcon>
      <TaskIcon active><svg width="24" height="24" viewBox="0 0 24 24"><circle cx="12" cy="12" r="12" fill="#fbc116" /><path d="M22.400 6H12L6.800 9 1.600 6a12 12 0 0 0 10.400 18l5.200-9z" fill="#27a04b" /><path d="M12 24l5.200-9 .2-6h5a12 12 0 0 1-10.400 15z" fill="#fbc116" /><path d="M1.600 6A12 12 0 0 1 22.400 6H12a6 6 0 0 0-5.200 9z" fill="#e33b2e" /><circle cx="12" cy="12" r="5.800" fill="#fff" /><circle cx="12" cy="12" r="4.500" fill="#2f72e6" /></svg></TaskIcon>
      <TaskIcon dot><svg width="18" height="24" viewBox="0 0 18 24"><rect width="18" height="24" rx="1.500" fill="#69737c" /><path d="M2 2h14v4H2z" fill="#55d5ef" /><path d="M2 8h4v4H2zM7 8h4v4H7zM12 8h4v4h-4zM2 13h4v4H2zM7 13h4v4H7zM2 18h4v4H2zM7 18h4v4H7z" fill="#c8cdd2" /><path d="M12 13h4v9h-4z" fill="#0d47a1" /></svg></TaskIcon>
    </div>
    <div className="ml-auto flex items-center pr-[20px] text-[11.500px] leading-4 tracking-[-0.3px]">
      <Svg w={12} h={8} sw={1.300} className="mr-[10px]"><path d="M1 7l5-5 5 5" /></Svg>
      <Svg w={16} h={12} className="mr-[8px]"><path d="M4 11a3.300 3.300 0 0 1 0-6 4.300 4.300 0 0 1 8 0 3.100 3.100 0 0 1 0 6z" fill="#aaa" stroke="#333" strokeWidth="1.300" /></Svg>
      <Svg w={17} h={18} sw={1.300} className="mr-[13px]"><path d="M1.500 7A6.500 6.500 0 0 1 13.500 5M14 1v4.500H9.500M1 16v-5h4.500M1.500 11.500C2.500 13.500 4 15 6.500 15.500" /><circle cx="12.500" cy="13" r="4" fill="#ff9800" stroke="none" /></Svg>
      <div className="mr-[18px] w-[24px] text-center">ENG<br />US</div>
      <Svg w={16} h={14} sw={1.200} className="mr-[8px]"><path d="M1 5a10 10 0 0 1 14 0M3.300 7.500a6.700 6.700 0 0 1 9.400 0M5.600 9.800a3.500 3.500 0 0 1 4.800 0" /><circle cx="8" cy="12" r="1" fill="currentColor" /></Svg>
      <Svg w={16} h={14} sw={1.100} className="mr-[7px]"><path d="M.8 5h2.500L7 1.800v10.400L3.300 9H.8zM9 5c1 1 1 3 0 4M11 3c2 2 2 6 0 8M13 1.200c3 3 3 8.600 0 11.600" /></Svg>
      <Svg w={17} h={14} sw={1.200} className="mr-[13px]"><rect x="5" y="4" width="10" height="7.500" rx="1" fill="#222" /><path d="M16.300 6.500v2.500M1 3.500h5v2a2.500 2.500 0 0 1-5 0zM2 1v2.500M5 1v2.500M3.500 8v3.500H6" /></Svg>
      <div className="mr-[7px] w-[58px] whitespace-nowrap text-right">5:47 PM<br />5/22/2023</div>
      <div className="flex h-4 w-4 items-center justify-center rounded-full bg-[#0078d4] text-[10px] font-semibold text-white">4</div>
    </div>
  </div>
);

export default function App() {
  return (
    <div className="flex h-[768px] w-[1366px] flex-col overflow-hidden bg-white font-['Open_Sans','Noto_Sans',sans-serif]">
      <Browser />
      <Header />
      <div className="flex h-[601px]">
        <LeftNav />
        <div className="flex flex-1 flex-col">
          <div className="flex h-[577px]">
            <PagesPane />
            <div className="flex flex-1 flex-col">
              <Toolbar />
              <div className="flex flex-1">
                <Report />
                <Filters />
              </div>
            </div>
          </div>
          <StatusBar />
        </div>
      </div>
      <Taskbar />
    </div>
  );
}
